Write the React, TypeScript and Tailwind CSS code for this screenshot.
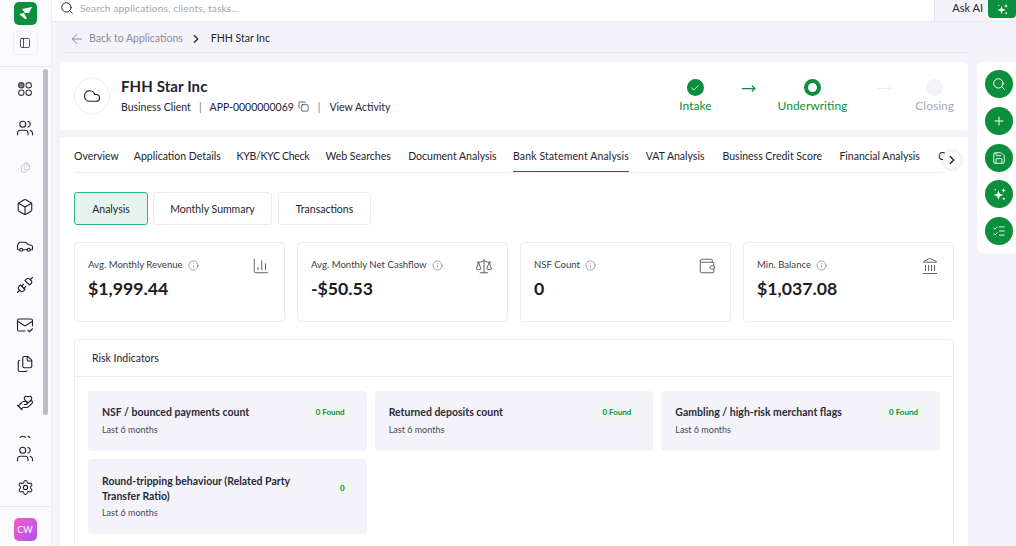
import React from "react";
import {
  Search, PanelLeft, Users, Box, Car, Unplug, MailCheck, Files, HandHeart, Settings, Cloud, Copy,
  ArrowLeft, ChevronRight, Check, MoveRight, Plus, Save, ListChecks, ChartColumn, Scale,
  Wallet, Landmark, Info,
} from "lucide-react";

const F = "font-['Lato','Noto_Sans',sans-serif]";

function Dots() {
  return (
    <svg width="14" height="14" viewBox="0 0 14 14" fill="none" stroke="#3f3f4f" strokeWidth="1.1" className="shrink-0">
      <circle cx="3.3" cy="3.3" r="2.7" fill="#7f7f8e" />
      <circle cx="10.7" cy="3.3" r="2.7" />
      <circle cx="3.3" cy="10.7" r="2.7" />
      <circle cx="10.7" cy="10.7" r="2.7" />
    </svg>
  );
}

function Spark({ size = 14 }: { size?: number }) {
  return (
    <svg width={size} height={size} viewBox="0 0 14 14" fill="#fff" className="shrink-0">
      <path d="M6 3 L7.2 6.3 L10.5 7.5 L7.2 8.7 L6 12 L4.8 8.7 L1.5 7.5 L4.8 6.3 Z" />
      <path d="M10.8 1 L11.4 2.6 L13 3.2 L11.4 3.8 L10.8 5.4 L10.2 3.8 L8.6 3.2 L10.2 2.6 Z" />
      <circle cx="11" cy="11" r="1" />
      <circle cx="3" cy="2.5" r="0.7" />
    </svg>
  );
}

function Logo() {
  return (
    <div className="w-[23px] h-[23px] rounded-[5px] bg-[#0b8f3c] flex items-center justify-center">
      <svg width="15" height="13" viewBox="0 0 15 13" fill="#fff">
        <path d="M4 2 L14 0 L11 6 L7 6 Z" />
        <path d="M1 7 L6 6 L9 12 L7 12 Z" />
      </svg>
    </div>
  );
}

const tabs = [
  { t: "Overview", w: "w-[43px]" },
  { t: "Application Details", w: "w-[86px]" },
  { t: "KYB/KYC Check", w: "w-[72px] tracking-[-0.3px]" },
  { t: "Web Searches", w: "w-[66px]" },
  { t: "Document Analysis", w: "w-[88px]" },
  { t: "Bank Statement Analysis", w: "w-[116px] tracking-[0.12px] h-[23px] border-b border-[#0b7a3e]" },
  { t: "VAT Analysis", w: "w-[60px]" },
  { t: "Business Credit Score", w: "w-[100px]" },
  { t: "Financial Analysis", w: "w-[82px]" },
  { t: "Compliance", w: "w-[60px]" },
];
const metrics = [
  { label: "Avg. Monthly Revenue", value: "$1,999.44", Icon: ChartColumn },
  { label: "Avg. Monthly Net Cashflow", value: "-$50.53", Icon: Scale },
  { label: "NSF Count", value: "0", Icon: Wallet },
  { label: "Min. Balance", value: "$1,037.08", Icon: Landmark },
];
const risks = [
  { t: "NSF / bounced payments count", b: "0 Found" },
  { t: "Returned deposits count", b: "0 Found" },
  { t: "Gambling / high-risk merchant flags", b: "0 Found" },
  { t: "Round-tripping behaviour (Related Party Transfer Ratio)", b: "0" },
];

export default function App() {
  const ic = "shrink-0";
  return (
    <div className={`${F} w-[1016px] h-[546px] overflow-hidden flex bg-[#f3f3f9] text-[#23232f]`}>
      <aside className="w-[52px] shrink-0 bg-[#fbfbfe] border-r border-[#eeeef5] flex flex-col">
        <div className="h-[67px] shrink-0 border-b border-[#e8e8f0] flex flex-col items-center pt-[2px] pr-[1px]">
          <Logo />
          <div className="mt-[6px] w-[25px] h-[24px] border border-[#eeeef5] rounded-[3px] flex items-center justify-center">
            <PanelLeft size={12} strokeWidth={1.5} className="text-[#26262f]" />
          </div>
        </div>
        <div className="h-[371px] shrink-0 overflow-hidden flex">
          <div className="w-[36px] ml-[7px] flex flex-col items-center pt-[13px] gap-[21.3px] text-[#23232f]">
            <div className="h-[18px] shrink-0 flex items-center"><Dots /></div>
            <Users size={18} strokeWidth={1.5} className={ic} />
            <div className="h-[18px] shrink-0 flex items-center"><Files size={11} strokeWidth={1.3} className="text-[#a8a8b5]" /></div>
            <Box size={18} strokeWidth={1.5} className={ic} />
            <Car size={18} strokeWidth={1.5} className={ic} />
            <Unplug size={18} strokeWidth={1.5} className={ic} />
            <MailCheck size={18} strokeWidth={1.5} className={ic} />
            <Files size={18} strokeWidth={1.5} className={ic} />
            <HandHeart size={18} strokeWidth={1.5} className={ic} />
            <Users size={18} strokeWidth={1.5} className={ic} />
          </div>
          <div className="w-[5px] mt-[2px] h-[346px] rounded-full bg-[#bcbcc4]" />
        </div>
        <div className="flex-1 flex flex-col items-center pr-[1px] text-[#23232f]">
          <div className="mt-[7px]"><Users size={18} strokeWidth={1.5} /></div>
          <div className="mt-[16px]"><Settings size={17} strokeWidth={1.5} /></div>
          <div className="mt-[10px] self-stretch border-t border-[#e8e8f0]" />
          <div className="mt-[11px] w-[23px] h-[23px] rounded-[5px] bg-gradient-to-br from-[#f858c0] to-[#b050f4] text-white text-[9px] flex items-center justify-center">CW</div>
        </div>
      </aside>

      <div className="flex-1 min-w-0 flex flex-col">
        <div className="h-[22px] shrink-0 flex border-b border-[#eaeaf4]">
          <div className="flex-1 bg-white flex items-center pl-[8px] pb-[5px] gap-[6px]">
            <Search size={14} strokeWidth={1.7} className="text-[#26262f]" />
            <span className="text-[10px] text-[#a3a3b8] tracking-[0.2px]">Search applications, clients, tasks...</span>
          </div>
          <div className="w-[82px] border-l border-[#e4e4ee] flex items-start justify-end">
            <span className="text-[11px] mr-[5px] leading-[15px]">Ask AI</span>
            <div className="w-[28px] h-[18px] bg-[#0b8f3c] rounded-b-[4px] flex items-center justify-center">
              <Spark size={13} />
            </div>
          </div>
        </div>

        <div className="flex-1 min-h-0 flex pl-[8px]">
          <div className="w-[908px] shrink-0 flex flex-col">
            <div className="h-[31px] shrink-0 border-b border-[#e8e8f2] ml-[4px] pl-[5px] pt-[3px] flex items-center text-[10.5px]">
              <ArrowLeft size={16} strokeWidth={1.5} className="text-[#8a8a98]" />
              <span className="ml-[4px] text-[#8b8b9a]">Back to Applications</span>
              <ChevronRight size={14} strokeWidth={2} className="ml-[6px] text-[#26262f]" />
              <span className="ml-[8px] text-[#26262f]">FHH Star Inc</span>
            </div>

            <div className="mt-[9px] h-[68px] shrink-0 bg-white rounded-t-[5px] flex items-center pl-[14px] pr-[14px]">
              <div className="w-[36px] h-[36px] rounded-full border border-[#eeeef5] flex items-center justify-center">
                <Cloud size={18} strokeWidth={1.6} />
              </div>
              <div className="ml-[11px]">
                <div className="text-[15px] font-bold leading-[18px] tracking-[0.1px] -mt-[2px]">FHH Star Inc</div>
                <div className="mt-[5px] flex items-center text-[10.5px] leading-[14px]">
                  <span>Business Client</span>
                  <span className="mx-[8px] text-[#777]">|</span>
                  <span>APP-0000000069</span>
                  <Copy size={11} strokeWidth={1.5} className="ml-[4px]" />
                  <span className="mx-[9px] text-[#777]">|</span>
                  <span>View Activity</span>
                </div>
              </div>
              <div className="ml-auto flex items-start text-[12px] leading-[16px] pt-[1px]">
                <div className="flex flex-col items-center text-[#0b8f3c]">
                  <div className="w-[17px] h-[17px] rounded-full bg-[#0b8f3c] flex items-center justify-center">
                    <Check size={10} className="text-white" strokeWidth={2} />
                  </div>
                  <span className="mt-[2px]">Intake</span>
                </div>
                <MoveRight size={15} strokeWidth={2} className="ml-[29px] mr-[22px] mt-[2px] text-[#0b8f3c]" />
                <div className="flex flex-col items-center text-[#0b8f3c]">
                  <div className="w-[17px] h-[17px] rounded-full border-[4px] border-[#0b8f3c]" />
                  <span className="mt-[2px]">Underwriting</span>
                </div>
                <MoveRight size={15} strokeWidth={1} className="ml-[30px] mr-[23px] mt-[2px] text-[#dedee8]" />
                <div className="flex flex-col items-center text-[#a9a9bf]">
                  <div className="w-[17px] h-[17px] rounded-full bg-[#f3f3f9]" />
                  <span className="mt-[2px]">Closing</span>
                </div>
              </div>
            </div>

            <div className="mt-[7px] flex-1 min-h-0 bg-white px-[14px] overflow-hidden">
              <div className="relative w-[880px]">
                <div className="h-[36px] w-[871px] border-b border-[#ebebf4] flex gap-[16.8px] overflow-hidden text-[10.5px] pt-[12px] leading-[14px] whitespace-nowrap">
                  {tabs.map((t) => (
                    <div key={t.t} className={`shrink-0 ${t.w}`}>{t.t}</div>
                  ))}
                </div>
                <div className="absolute -right-[7px] top-[14px] w-[18px] h-[18px] rounded-full bg-white shadow-[0_0_4px_rgba(0,0,0,0.18)] flex items-center justify-center">
                  <ChevronRight size={14} strokeWidth={2.2} className="text-[#1c1c26]" />
                </div>
              </div>

              <div className="mt-[19px] flex gap-[5px] text-[10.5px]">
                <div className="w-[74px] h-[33px] pt-[2px] rounded-[3px] border border-[#2bb58f] bg-[#e7f3ee] flex items-center justify-center">Analysis</div>
                <div className="w-[119px] h-[33px] pt-[2px] rounded-[3px] border border-[#ebebf3] flex items-center justify-center">Monthly Summary</div>
                <div className="w-[93px] h-[33px] pt-[2px] rounded-[3px] border border-[#ebebf3] flex items-center justify-center ml-[1px]">Transactions</div>
              </div>

              <div className="mt-[17px] grid grid-cols-4 gap-[12px]">
                {metrics.map(({ label, value, Icon }) => (
                  <div key={label} className="h-[80px] rounded-[4px] border border-[#ebebf3] pl-[13px] pr-[14px] pt-[14px] flex justify-between">
                    <div>
                      <div className="mt-[1px] flex items-center gap-[5px] text-[9.6px] leading-[14px] text-[#3c3c4a]">
                        {label}
                        <Info size={11} strokeWidth={1.2} className="text-[#5f5f70]" />
                      </div>
                      <div className="mt-[5px] text-[17.7px] font-bold leading-[24px] text-[#1c1c26]">{value}</div>
                    </div>
                    <Icon size={18} strokeWidth={1.3} className="text-[#5f5f70]" />
                  </div>
                ))}
              </div>

              <div className="mt-[17px] rounded-t-[4px] border border-b-0 border-[#ebebf3] h-[220px]">
                <div className="h-[37px] border-b border-[#ebebf3] pl-[17px] pt-[1px] flex items-center text-[10.5px]">Risk Indicators</div>
                <div className="pt-[14px] px-[13px] grid grid-cols-3 gap-[8px] items-start">
                  {risks.map((r) => {
                    const lone = r.b === "0";
                    return (
                      <div key={r.t} className={`rounded-[4px] bg-[#f3f3f9] pl-[14px] pr-[17px] pb-[14px] flex justify-between items-start ${lone ? "pt-[15px]" : "pt-[14px]"}`}>
                        <div className="w-[205px]">
                          <div className="text-[10.5px] font-bold leading-[15px] text-[#2a2a38]">{r.t}</div>
                          <div className={`text-[9px] leading-[14px] text-[#4a4a58] ${lone ? "mt-[2px]" : "mt-[3px]"}`}>Last 6 months</div>
                        </div>
                        <div className={`bg-[#eef7f1] text-[#0b8f3c] text-[8px] font-bold leading-[14px] px-[5px] rounded-[3px] whitespace-nowrap ${lone ? "mt-[7px]" : ""}`}>{r.b}</div>
                      </div>
                    );
                  })}
                </div>
              </div>
            </div>
          </div>

          <div className="ml-[9px] mt-[40px] w-[39px] h-[191px] bg-white rounded-l-[5px] pl-[8px] pt-[8px] flex flex-col gap-[8.8px]">
            <div className="w-[28px] h-[28px] rounded-full bg-[#0b8f3c] flex items-center justify-center"><Search size={14} strokeWidth={1.7} className="text-white" /></div>
            <div className="w-[28px] h-[28px] rounded-full bg-[#0b8f3c] flex items-center justify-center"><Plus size={14} strokeWidth={1.7} className="text-white" /></div>
            <div className="w-[28px] h-[28px] rounded-full bg-[#0b8f3c] flex items-center justify-center"><Save size={14} strokeWidth={1.5} className="text-white" /></div>
            <div className="w-[28px] h-[28px] rounded-full bg-[#0b8f3c] flex items-center justify-center"><Spark size={15} /></div>
            <div className="w-[28px] h-[28px] rounded-full bg-[#0b8f3c] flex items-center justify-center"><ListChecks size={14} strokeWidth={1.6} className="text-white" /></div>
          </div>
        </div>
      </div>
    </div>
  );
}
